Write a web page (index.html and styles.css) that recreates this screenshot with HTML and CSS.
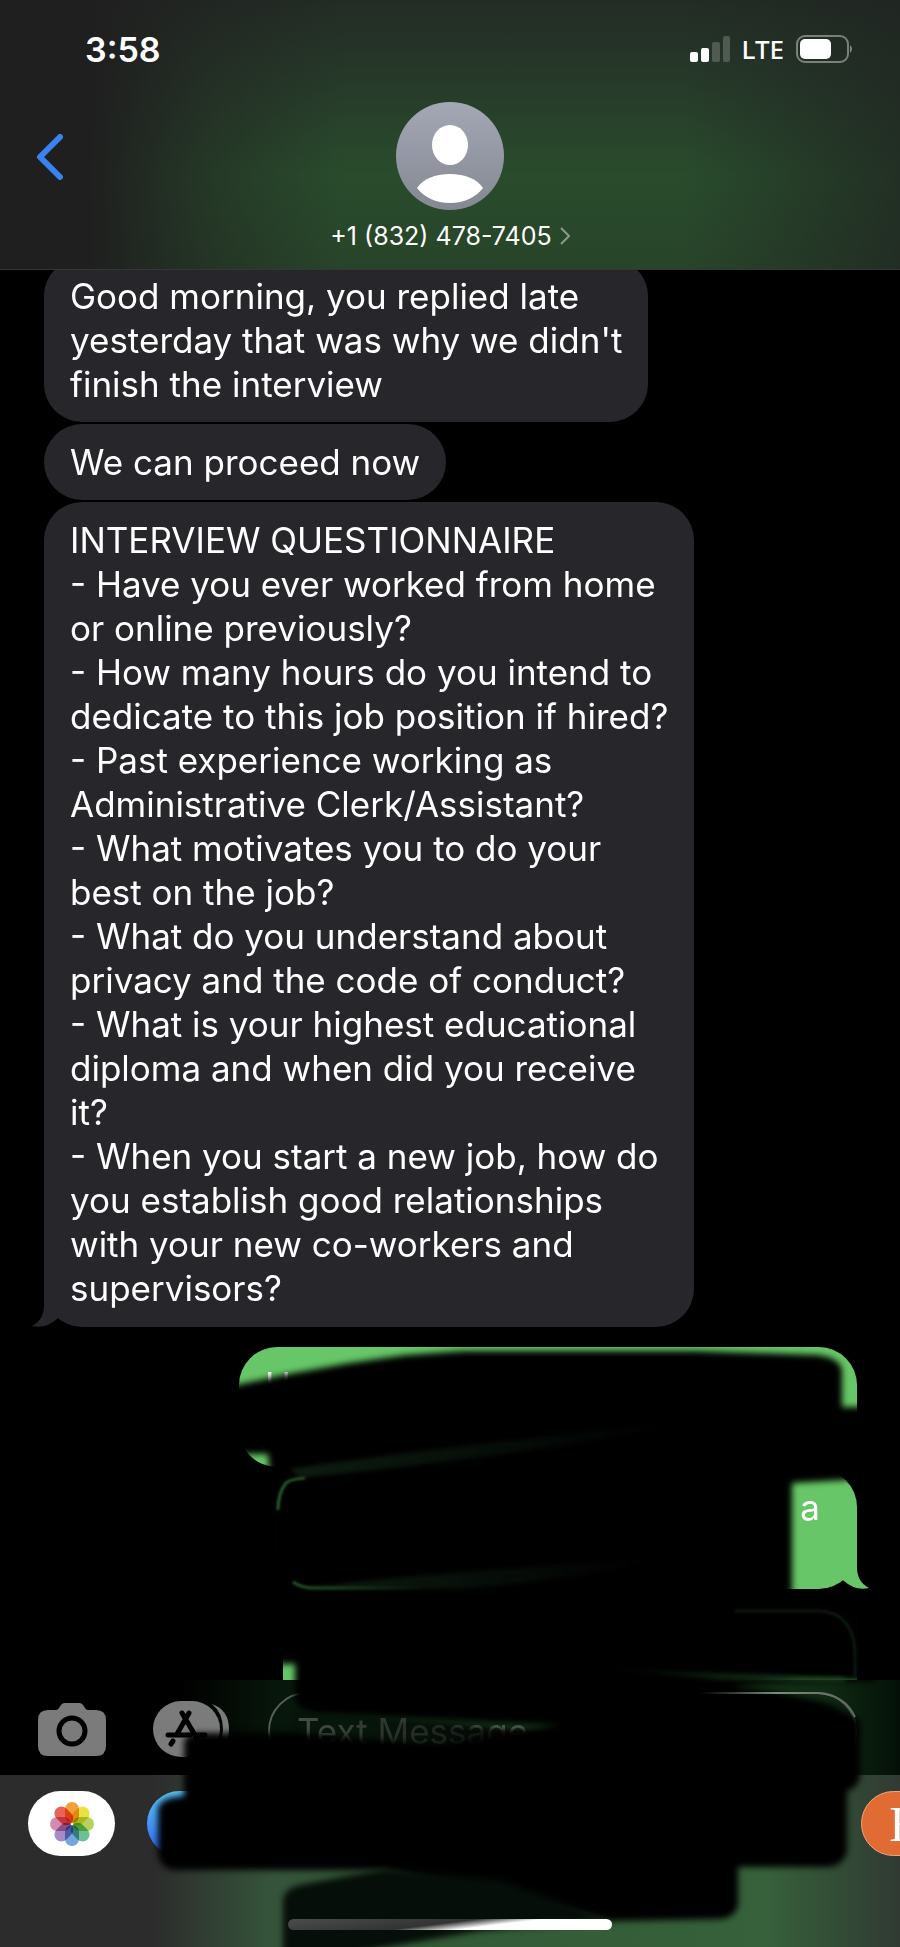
FILE: index.html
```html
<!DOCTYPE html>
<html lang="en">
<head>
    <meta charset="UTF-8">
    <meta name="viewport" content="width=device-width, initial-scale=1">
    <title>Messages</title>
    <link rel="stylesheet" href="styles.css">
</head>
<body>
    <div class="phone">
        <header class="header">
            <div class="status">
                <span class="time">3:58</span>
                <div class="status-icons">
                    <svg width="40" height="26" viewBox="0 0 40 26" fill="#fff">
                        <rect x="0" y="16" width="8" height="10" rx="2"/>
                        <rect x="11" y="12" width="8" height="14" rx="2"/>
                        <rect x="22" y="6" width="8" height="20" rx="2" opacity=".2"/>
                        <rect x="33" y="0" width="7" height="26" rx="2" opacity=".2"/>
                    </svg>
                    <span class="network">LTE</span>
                    <svg width="58" height="28" viewBox="0 0 58 28">
                        <rect x="1" y="1" width="51" height="26" rx="8" fill="none" stroke="#fff" stroke-width="2" opacity=".4"/>
                        <rect x="4" y="4" width="31" height="20" rx="5" fill="#fff"/>
                        <path d="M54 10q4 4 0 8z" fill="#fff" opacity=".45"/>
                    </svg>
                </div>
            </div>
            <div class="nav">
                <button class="back" aria-label="Back">
                    <svg width="28" height="46" viewBox="0 0 28 46" fill="none" stroke="#3b82f0" stroke-width="6" stroke-linecap="round" stroke-linejoin="round">
                        <path d="M24 3L4 23l20 20"/>
                    </svg>
                </button>
                <a class="contact" href="#">
                    <svg width="108" height="108" viewBox="0 0 108 108">
                        <defs>
                            <linearGradient id="avatar" x1="0" y1="0" x2="0" y2="1">
                                <stop offset="0" stop-color="#a4a8b5"/>
                                <stop offset="1" stop-color="#848892"/>
                            </linearGradient>
                        </defs>
                        <circle cx="54" cy="54" r="54" fill="url(#avatar)"/>
                        <ellipse cx="54" cy="43" rx="18" ry="20" fill="#fff"/>
                        <path d="M21 86c6-9 18-14 33-14s27 5 33 14c-7 9-19 15-33 15s-26-6-33-15z" fill="#fff"/>
                    </svg>
                    <span class="number">+1 (832) 478-7405
                        <svg width="10" height="18" viewBox="0 0 10 18" fill="none" stroke="#8b998d" stroke-width="2">
                            <path d="M1 1l8 8-8 8"/>
                        </svg>
                    </span>
                </a>
            </div>
        </header>

        <main class="messages">
            <p class="bubble">Good morning, you replied late<br>yesterday that was why we didn't<br>finish the interview</p>
            <p class="bubble">We can proceed now</p>
            <p class="bubble last">
                INTERVIEW QUESTIONNAIRE<br>
                - Have you ever worked from home<br>or online previously?<br>
                - How many hours do you intend to<br>dedicate to this job position if hired?<br>
                - Past experience working as<br>Administrative Clerk/Assistant?<br>
                - What motivates you to do your<br>best on the job?<br>
                - What do you understand about<br>privacy and the code of conduct?<br>
                - What is your highest educational<br>diploma and when did you receive<br>it?<br>
                - When you start a new job, how do<br>you establish good relationships<br>with your new co-workers and<br>supervisors?
                <svg class="tail" width="48" height="48" viewBox="0 0 48 48">
                    <path d="M24 40Q33 48 48 48V49H24z" fill="#000"/>
                    <path d="M12 0V26Q12 41 0 47Q14 50 25 40L34 34V0z" fill="#27262b"/>
                </svg>
            </p>
            <p class="bubble sent first">H</p>
            <p class="bubble sent second">a
                <svg class="tail" width="48" height="48" viewBox="0 0 48 48">
                    <path d="M24 40Q33 48 48 48V49H24z" fill="#000"/>
                    <path d="M12 0V26Q12 41 0 47Q14 50 25 40L34 34V0z" fill="#67c667"/>
                </svg>
            </p>
            <p class="bubble sent third"></p>
        </main>

        <footer class="footer">
            <div class="compose">
                <button class="tool" aria-label="Camera">
                    <svg width="68" height="53" viewBox="0 0 68 53">
                        <path d="M10 7h8q2 0 3-2l2-3q1-2 4-2h14q3 0 4 2l2 3q1 2 3 2h8q10 0 10 10v26q0 10-10 10H10Q0 53 0 43V17Q0 7 10 7z" fill="#7b7b7b"/>
                        <circle cx="34" cy="28" r="13" fill="none" stroke="#000" stroke-width="5"/>
                    </svg>
                </button>
                <button class="tool" aria-label="Apps">
                    <svg width="77" height="56" viewBox="0 0 77 56">
                        <path d="M59 3q17 6 17 25t-17 25q11-9 11-25T59 3z" fill="#7b7b7b"/>
                        <rect width="67" height="56" rx="28" fill="#7b7b7b"/>
                        <g stroke="#000" stroke-width="5" stroke-linecap="round" fill="none">
                            <path d="M36 12L24 33M29 12l17 29M15 34h22M43 34h9M20 40l-2 3"/>
                        </g>
                    </svg>
                </button>
                <input class="message-input" type="text" placeholder="Text Message" aria-label="Text Message">
            </div>
            <div class="apps">
                <button class="app photos" aria-label="Photos">
                    <svg width="46" height="46" viewBox="-23 -23 46 46">
                        <g class="petals">
                            <rect x="-7" y="-22" width="14" height="21" rx="7" fill="#f3a03a"/>
                            <rect x="-7" y="-22" width="14" height="21" rx="7" fill="#ebe044" transform="rotate(45)"/>
                            <rect x="-7" y="-22" width="14" height="21" rx="7" fill="#b5d35c" transform="rotate(90)"/>
                            <rect x="-7" y="-22" width="14" height="21" rx="7" fill="#6dbf95" transform="rotate(135)"/>
                            <rect x="-7" y="-22" width="14" height="21" rx="7" fill="#74a6dc" transform="rotate(180)"/>
                            <rect x="-7" y="-22" width="14" height="21" rx="7" fill="#a48cc4" transform="rotate(225)"/>
                            <rect x="-7" y="-22" width="14" height="21" rx="7" fill="#d58bb0" transform="rotate(270)"/>
                            <rect x="-7" y="-22" width="14" height="21" rx="7" fill="#ea6358" transform="rotate(315)"/>
                        </g>
                    </svg>
                </button>
                <button class="app store" aria-label="App Store"></button>
                <button class="app shop">E</button>
            </div>
            <div class="home"></div>
        </footer>

        <!-- black marker over the private replies -->
        <svg class="marker" viewBox="0 1330 900 617">
            <defs>
                <filter id="soft" x="-10%" y="-10%" width="120%" height="120%" color-interpolation-filters="sRGB">
                    <feGaussianBlur stdDeviation="3"/>
                </filter>
                <filter id="softer" x="-10%" y="-50%" width="120%" height="200%" color-interpolation-filters="sRGB">
                    <feGaussianBlur stdDeviation="2"/>
                </filter>
                <filter id="thin" x="-10%" y="-50%" width="120%" height="200%" color-interpolation-filters="sRGB">
                    <feGaussianBlur stdDeviation="1"/>
                </filter>
                <linearGradient id="streak" x1="0" y1="0" x2="1" y2="0">
                    <stop offset="0" stop-color="#0d1c11"/>
                    <stop offset="1" stop-color="#0d1c11" stop-opacity="0"/>
                </linearGradient>
                <linearGradient id="edge" x1="0" y1="0" x2="1" y2="0">
                    <stop offset="0" stop-color="#2a5c2c"/>
                    <stop offset="1" stop-color="#2a5c2c" stop-opacity="0"/>
                </linearGradient>
                <linearGradient id="fade-in" x1="0" y1="0" x2="1" y2="0">
                    <stop offset="0" stop-color="#123016" stop-opacity="0"/>
                    <stop offset="1" stop-color="#1f4a23"/>
                </linearGradient>
                <linearGradient id="border" x1="0" y1="0" x2="1" y2="0">
                    <stop offset="0" stop-color="#7d8a7e" stop-opacity="0"/>
                    <stop offset=".5" stop-color="#7d8a7e"/>
                    <stop offset="1" stop-color="#5c675d"/>
                </linearGradient>
                <linearGradient id="fade" x1="0" y1="0" x2="1" y2="0">
                    <stop offset="0" stop-opacity=".2"/>
                    <stop offset="1"/>
                </linearGradient>
            </defs>
            <path d="M232 1386L289 1374 350 1363 406 1355 463 1351H697L818 1355Q840 1358 842 1370V1407H875V1474L845 1480 792 1483V1600H875V1681H800L730 1686 775 1692 827 1703 860 1720V1777Q858 1788 847 1791V1852Q842 1867 827 1867H738V1906Q734 1918 720 1919L610 1921 480 1890 385 1870H172Q158 1866 158 1852V1808Q161 1797 184 1796V1742Q186 1733 200 1733H290L440 1745 560 1725 320 1713Q296 1711 295 1698V1664H270V1480L268 1454H232z" filter="url(#soft)"/>
            <path d="M292 1711L330 1714 440 1723 560 1735 500 1760 290 1738z" fill="url(#fade)" filter="url(#softer)"/>
            <path d="M385 1869L300 1885Q283 1889 283 1902V1955H340L480 1931 610 1920 500 1880z" fill="#050e08" filter="url(#soft)"/>
            <g filter="url(#softer)">
                <path d="M290 1469Q400 1452 680 1422 560 1452 300 1478z" fill="url(#streak)"/>
                <path d="M300 1589Q420 1572 660 1559 560 1582 460 1589z" fill="url(#streak)"/>
                <path d="M600 1668L845 1678V1681L720 1680z" fill="url(#fade-in)"/>
            </g>
            <g fill="none" stroke-width="3" filter="url(#thin)">
                <path d="M278 1510Q278 1493 286 1483Q290 1479 305 1478M293 1582Q301 1588 315 1588H430" stroke="url(#edge)"/>
                <path d="M735 1611H820Q852 1613 855 1650V1678" stroke="#0a1a0e"/>
            </g>
            <path d="M700 1693H818Q845 1695 855 1717" fill="none" stroke="url(#border)" stroke-width="2"/>
        </svg>
    </div>
</body>
</html>
```

FILE: styles.css
```css
* {
    box-sizing: border-box;
}

body {
    margin: 0;
    background: #000;
    color: #fff;
    font-family: Inter, "Liberation Sans", sans-serif;
}

button {
    padding: 0;
    border: none;
    background: none;
    color: inherit;
}

svg {
    display: block;
}

.phone {
    position: relative;
    overflow: hidden;
}

/* header */
.header {
    position: relative;
    z-index: 1;
    padding: 28px 46px 18px 36px;
    background:
        linear-gradient(to right, #1f1f1f 10%, rgba(31, 31, 31, 0.4) 24%, rgba(31, 31, 31, 0) 38%, rgba(31, 31, 31, 0) 76%, rgba(31, 36, 33, 0.7)),
        linear-gradient(to bottom, #232b25, #273d2a 36%, #294c2c 65%, #28442a);
    border-bottom: 1px solid #333735;
}

.status {
    display: flex;
    justify-content: space-between;
    align-items: center;
    height: 42px;
    padding-left: 49px;
}

.time {
    font-size: 34px;
    font-weight: 600;
}

.status-icons {
    display: flex;
    align-items: center;
    gap: 12px;
}

.network {
    font-family: "Noto Sans", sans-serif;
    font-size: 26px;
    font-weight: 500;
    line-height: 28px;
}

.nav {
    display: grid;
    grid-template-columns: 1fr auto 1fr;
    margin: 32px -10px 0 0;
}

.back {
    justify-self: start;
    align-self: start;
    margin-top: 32px;
}

.contact {
    display: flex;
    flex-direction: column;
    align-items: center;
    gap: 11px;
    color: #fff;
    text-decoration: none;
}

.number {
    display: flex;
    align-items: center;
    gap: 8px;
    font-size: 25px;
    line-height: 30px;
}

/* conversation */
.messages {
    display: flex;
    flex-direction: column;
    align-items: flex-start;
    gap: 2px;
    margin-top: -12px;
    padding: 0 43px 0 44px;
}

.bubble {
    position: relative;
    margin: 0;
    padding: 16px 26px;
    border-radius: 38px;
    background: #27262b;
    font-size: 35px;
    line-height: 44px;
}

.last {
    padding-bottom: 17px;
}

.sent {
    align-self: flex-end;
    min-height: 120px;
    background: #67c667;
}

.first {
    min-width: 618px;
    margin-top: 18px;
}

.second {
    min-width: 581px;
    padding-right: 37px;
    text-align: right;
}

.third {
    min-width: 574px;
    margin-top: 18px;
}

.tail {
    position: absolute;
    bottom: 0;
    left: -12px;
}

.sent .tail {
    left: auto;
    right: -12px;
    transform: scaleX(-1);
}

/* compose bar and app drawer */
.footer {
    position: relative;
    margin-top: -49px;
    background: linear-gradient(to right, #2c2c2c 17%, #35533a 30%, #335936 45%, #36613a 85%, #303a32);
}

.compose {
    display: flex;
    align-items: flex-start;
    height: 95px;
    padding: 12px 43px 0 38px;
    background: linear-gradient(to right, #000 20%, #0c2411 38%, #173a1b 75%, #0f2a13 92%, #041007);
}

.tool {
    margin: 11px 47px 0 0;
}

.tool + .tool {
    margin: 9px 38px 0 0;
}

.message-input {
    flex: 1;
    min-width: 0;
    height: 78px;
    padding: 0 27px;
    border: 2px solid #566058;
    border-radius: 39px;
    background: none;
    color: #fff;
    font: 35px/44px Inter, "Liberation Sans", sans-serif;
}

.message-input::placeholder {
    color: #59655b;
    opacity: 1;
}

.apps {
    display: grid;
    grid-template-columns: repeat(8, 87px);
    gap: 32px;
    padding: 16px 28px 91px;
    overflow: hidden;
}

.app {
    display: flex;
    align-items: center;
    justify-content: center;
    height: 65px;
    border-radius: 33px;
}

.photos {
    background: #fff;
}

.petals rect {
    mix-blend-mode: multiply;
}

.store {
    background: linear-gradient(#5ac8fa, #2e62f0);
}

.shop {
    grid-column: 8;
    border: 1px solid #efa57f;
    background: #e06c34;
    font: 50px "Liberation Serif", serif;
}

.home {
    position: absolute;
    z-index: 2;
    bottom: 17px;
    left: 50%;
    width: 36%;
    height: 11px;
    border-radius: 6px;
    background: linear-gradient(173deg, #4c4c4c, #333 46%, #fff 62%);
    transform: translateX(-50%);
}

.marker {
    position: absolute;
    bottom: 0;
    left: 0;
    width: 100%;
    height: auto;
}
```
